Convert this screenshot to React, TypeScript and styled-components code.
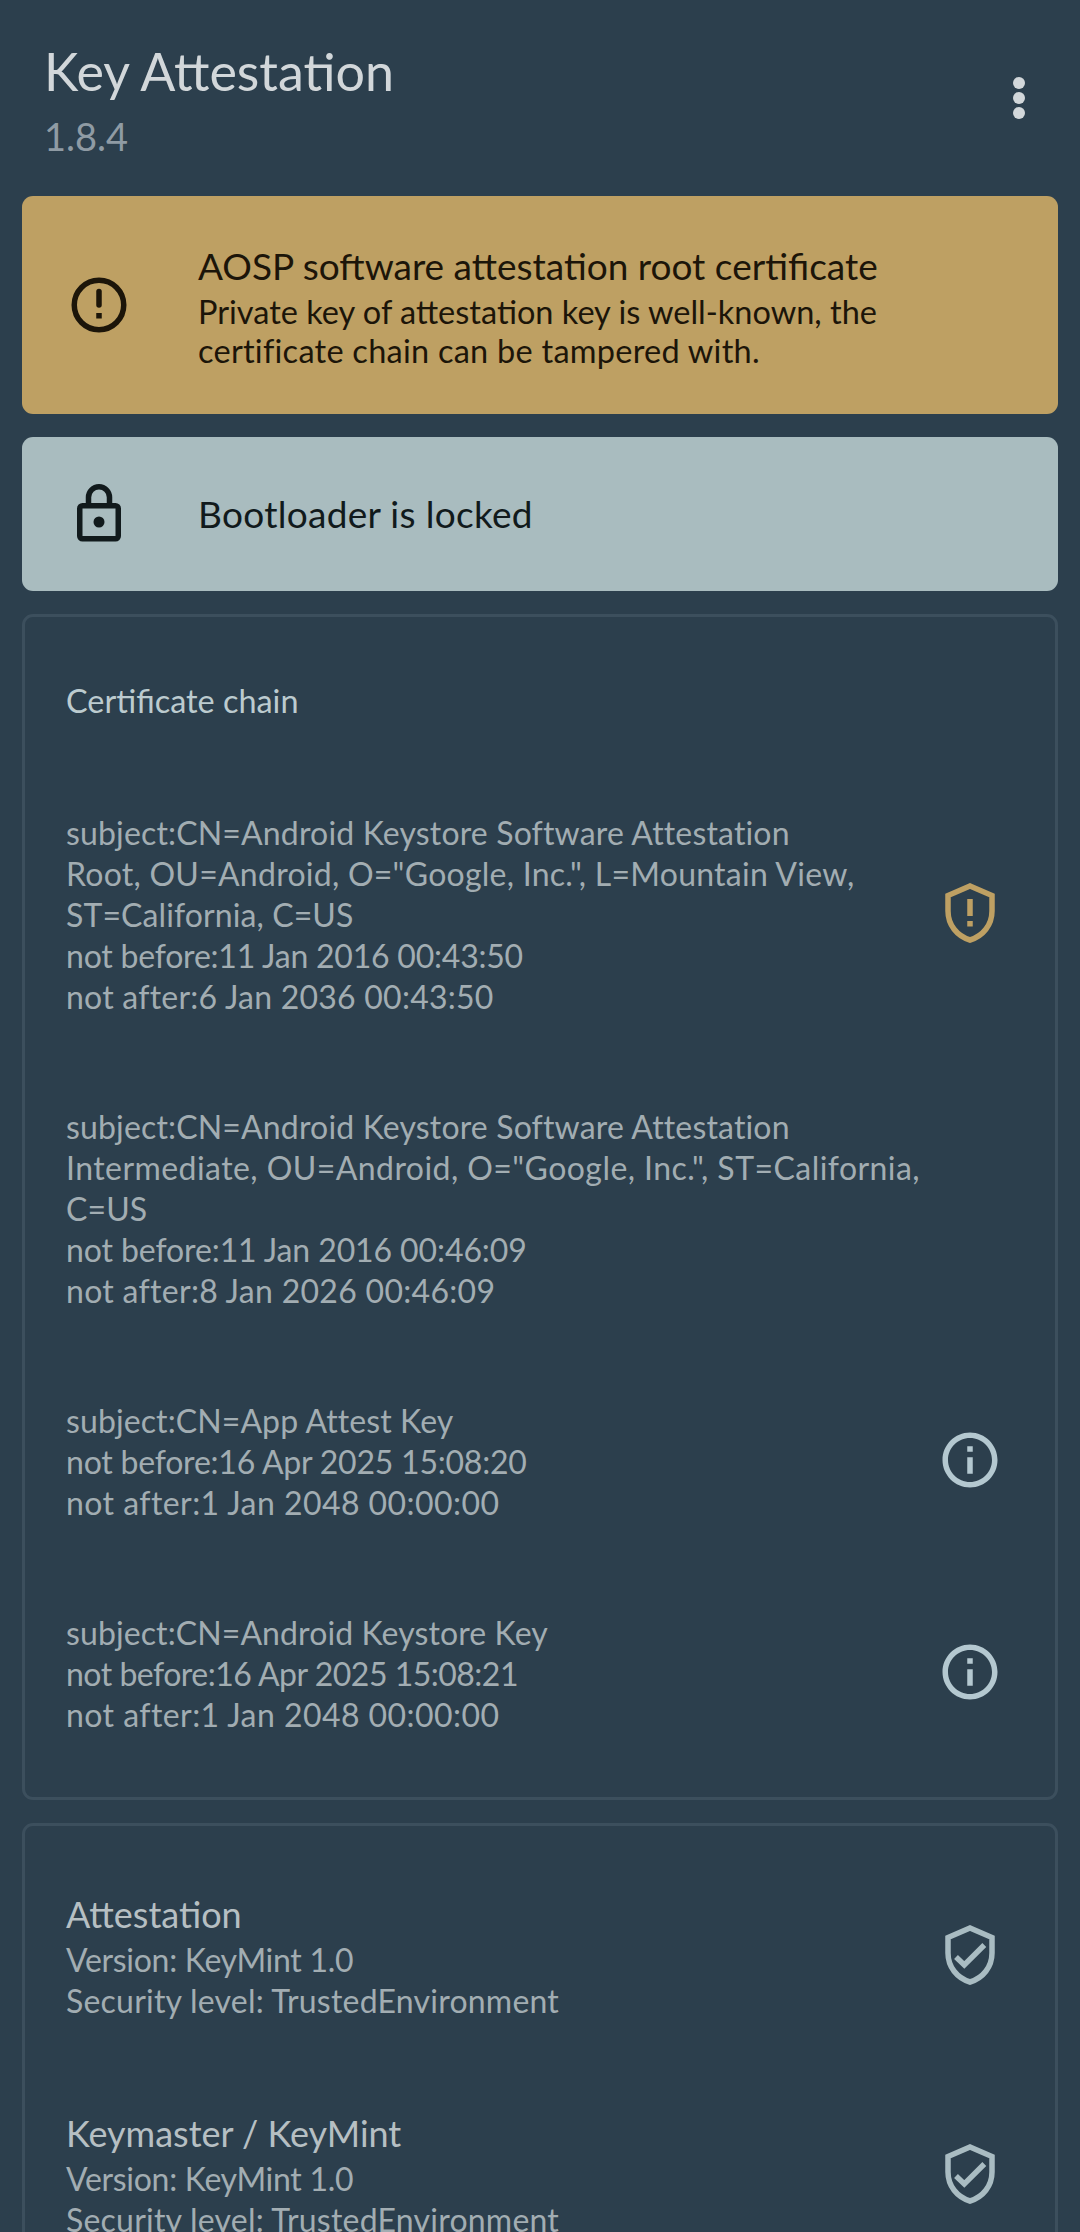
import React from "react";
import styled, { createGlobalStyle } from "styled-components";

const Global = createGlobalStyle`
  html, body { margin: 0; padding: 0; background: #2c3f4d; height: 2232px; overflow: hidden; }
  #root { height: 2232px; overflow: hidden; }
  * { box-sizing: border-box; }
`;

const Page = styled.main`
  display: flex;
  flex-direction: column;
  padding: 0 22px;
  font-family: "Lato", "Noto Sans", sans-serif;
  background: #2c3f4d;
`;

const Header = styled.header`
  display: flex;
  justify-content: space-between;
  align-items: flex-start;
  height: 196px;
  padding: 36px 20px 0 22px;
`;

const AppTitle = styled.h1`
  margin: 0;
  font-size: 52px;
  line-height: 70px;
  font-weight: 400;
  color: #d2d7da;
`;

const Version = styled.div`
  margin: 1px 0 0 0;
  font-size: 38px;
  line-height: 58px;
  color: #8f9ba4;
`;

const MenuDots = styled.svg`
  width: 66px;
  height: 66px;
  margin-top: 29px;
  margin-right: -14px;
  flex: none;
`;

const Banner = styled.section<{ $bg: string; $fg: string; $height: number }>`
  display: flex;
  align-items: center;
  height: ${(p) => p.$height}px;
  padding-left: 44px;
  gap: 66px;
  border-radius: 11px;
  background: ${(p) => p.$bg};
  color: ${(p) => p.$fg};
`;

const BannerIcon = styled.svg`
  width: 66px;
  height: 66px;
  flex: none;
`;

const BannerTitle = styled.div`
  font-size: 37px;
  line-height: 52px;
`;

const BannerLabel = styled.div`
  font-size: 37px;
  line-height: 52px;
  letter-spacing: 0.3px;
`;

const BannerBody = styled.div<{ $track?: number }>`
  font-size: 32.5px;
  line-height: 39px;
  letter-spacing: ${(p) => p.$track ?? 0}px;
`;

const Gap = styled.div`
  height: 23px;
  flex: none;
`;

const Card = styled.section<{ $pad: number }>`
  display: flex;
  flex-direction: column;
  border: 3px solid #3c4f5d;
  border-radius: 11px;
  padding: ${(p) => p.$pad}px 52px 62px 41px;
`;

const CardHeading = styled.div`
  font-size: 32.4px;
  line-height: 41px;
  color: #bccbcf;
  margin-bottom: 91px;
`;

const Row = styled.div<{ $gap: number }>`
  display: flex;
  align-items: center;
  justify-content: space-between;
  margin-bottom: ${(p) => p.$gap}px;
  &:last-child { margin-bottom: 0; }
`;

const RowText = styled.div`
  flex: 1;
  min-width: 0;
`;

const RowTitle = styled.div`
  font-size: 36px;
  line-height: 50px;
  color: #b6bfc3;
`;

const Line = styled.div<{ $track: number }>`
  font-size: 32px;
  line-height: 41px;
  letter-spacing: ${(p) => p.$track}px;
  color: #a2adb2;
  white-space: nowrap;
`;

const RowIcon = styled.svg`
  width: 66px;
  height: 66px;
  flex: none;
`;

const CertIcon = styled(RowIcon)`
  margin-bottom: 4px;
`;

const AlertIcon = () => (
  <BannerIcon viewBox="0 0 66 66">
    <circle cx="33" cy="33" r="24.75" fill="none" stroke="currentColor" strokeWidth="5.5" />
    <path d="M33 19.5V33" stroke="currentColor" strokeWidth="5.5" strokeLinecap="round" fill="none" />
    <rect x="30.25" y="41" width="5.5" height="5.5" fill="currentColor" />
  </BannerIcon>
);

const LockIcon = () => (
  <BannerIcon viewBox="0 0 66 66">
    <rect x="13.75" y="24.75" width="38.5" height="33" rx="2.75" fill="none" stroke="currentColor" strokeWidth="5.5" />
    <path d="M22.5 24V16.25A10.5 10.5 0 0 1 43.5 16.25V24" fill="none" stroke="currentColor" strokeWidth="5.5" />
    <circle cx="33" cy="41" r="5.5" fill="currentColor" />
  </BannerIcon>
);

const SHIELD = "M33 6L55 15.5V31C55 45 46 56 33 60C20 56 11 45 11 31V15.5Z";

const ShieldWarn = () => (
  <CertIcon viewBox="0 0 66 66">
    <path d={SHIELD} fill="none" stroke="#bea063" strokeWidth="5.5" />
    <rect x="30.25" y="19" width="5.5" height="17" fill="#bea063" />
    <rect x="30.25" y="41" width="5.5" height="5.5" fill="#bea063" />
  </CertIcon>
);

const ShieldCheck = () => (
  <RowIcon viewBox="0 0 66 66">
    <path d={SHIELD} fill="none" stroke="#a9bcc2" strokeWidth="5.5" />
    <path d="M19 35L27.3 43L47.3 23" fill="none" stroke="#a9bcc2" strokeWidth="5.5" />
  </RowIcon>
);

const InfoIcon = () => (
  <CertIcon viewBox="0 0 24 24">
    <path
      fill="#b4c8d0"
      d="M11 7h2v2h-2zm0 4h2v6h-2zm1-9C6.48 2 2 6.48 2 12s4.48 10 10 10 10-4.48 10-10S17.52 2 12 2zm0 18c-4.41 0-8-3.59-8-8s3.59-8 8-8 8 3.59 8 8-3.59 8-8 8z"
    />
  </CertIcon>
);

type TextLine = [string, number];

const certs: { lines: TextLine[]; icon?: React.ReactNode }[] = [
  {
    lines: [
      ["subject:CN=Android Keystore Software Attestation", 0.16],
      ['Root, OU=Android, O="Google, Inc.", L=Mountain View,', 0.26],
      ["ST=California, C=US", 0.1],
      ["not before:11 Jan 2016 00:43:50", -0.22],
      ["not after:6 Jan 2036 00:43:50", 0.24],
    ],
    icon: <ShieldWarn />,
  },
  {
    lines: [
      ["subject:CN=Android Keystore Software Attestation", 0.16],
      ['Intermediate, OU=Android, O="Google, Inc.", ST=California,', 0.44],
      ["C=US", 0.1],
      ["not before:11 Jan 2016 00:46:09", -0.1],
      ["not after:8 Jan 2026 00:46:09", 0.3],
    ],
  },
  {
    lines: [
      ["subject:CN=App Attest Key", 0.1],
      ["not before:16 Apr 2025 15:08:20", -0.22],
      ["not after:1 Jan 2048 00:00:00", 0.44],
    ],
    icon: <InfoIcon />,
  },
  {
    lines: [
      ["subject:CN=Android Keystore Key", 0.1],
      ["not before:16 Apr 2025 15:08:21", -0.5],
      ["not after:1 Jan 2048 00:00:00", 0.44],
    ],
    icon: <InfoIcon />,
  },
];

const versionLines: TextLine[] = [
  ["Version: KeyMint 1.0", -0.3],
  ["Security level: TrustedEnvironment", 0.22],
];

const props = [
  { title: "Attestation", lines: versionLines },
  { title: "Keymaster / KeyMint", lines: versionLines },
];

export default function App() {
  return (
    <Page>
      <Global />
      <Header>
        <div>
          <AppTitle>Key Attestation</AppTitle>
          <Version>1.8.4</Version>
        </div>
        <MenuDots viewBox="0 0 66 66">
          <circle cx="33" cy="18" r="6" fill="#d2d7da" />
          <circle cx="33" cy="33" r="6" fill="#d2d7da" />
          <circle cx="33" cy="48" r="6" fill="#d2d7da" />
        </MenuDots>
      </Header>

      <Banner $bg="#bea063" $fg="#1c1509" $height={218}>
        <AlertIcon />
        <div>
          <BannerTitle>AOSP software attestation root certificate</BannerTitle>
          <BannerBody>Private key of attestation key is well-known, the</BannerBody>
          <BannerBody $track={0.25}>certificate chain can be tampered with.</BannerBody>
        </div>
      </Banner>
      <Gap />
      <Banner $bg="#a9bcbf" $fg="#111a1c" $height={154}>
        <LockIcon />
        <BannerLabel>Bootloader is locked</BannerLabel>
      </Banner>
      <Gap />

      <Card $pad={63}>
        <CardHeading>Certificate chain</CardHeading>
        {certs.map((c, i) => (
          <Row key={i} $gap={89}>
            <RowText>
              {c.lines.map(([text, track]) => (
                <Line key={text} $track={track}>
                  {text}
                </Line>
              ))}
            </RowText>
            {c.icon}
          </Row>
        ))}
      </Card>
      <Gap />

      <Card $pad={63}>
        {props.map((p) => (
          <Row key={p.title} $gap={87}>
            <RowText>
              <RowTitle>{p.title}</RowTitle>
              {p.lines.map(([text, track]) => (
                <Line key={text} $track={track}>
                  {text}
                </Line>
              ))}
            </RowText>
            <ShieldCheck />
          </Row>
        ))}
      </Card>
    </Page>
  );
}
